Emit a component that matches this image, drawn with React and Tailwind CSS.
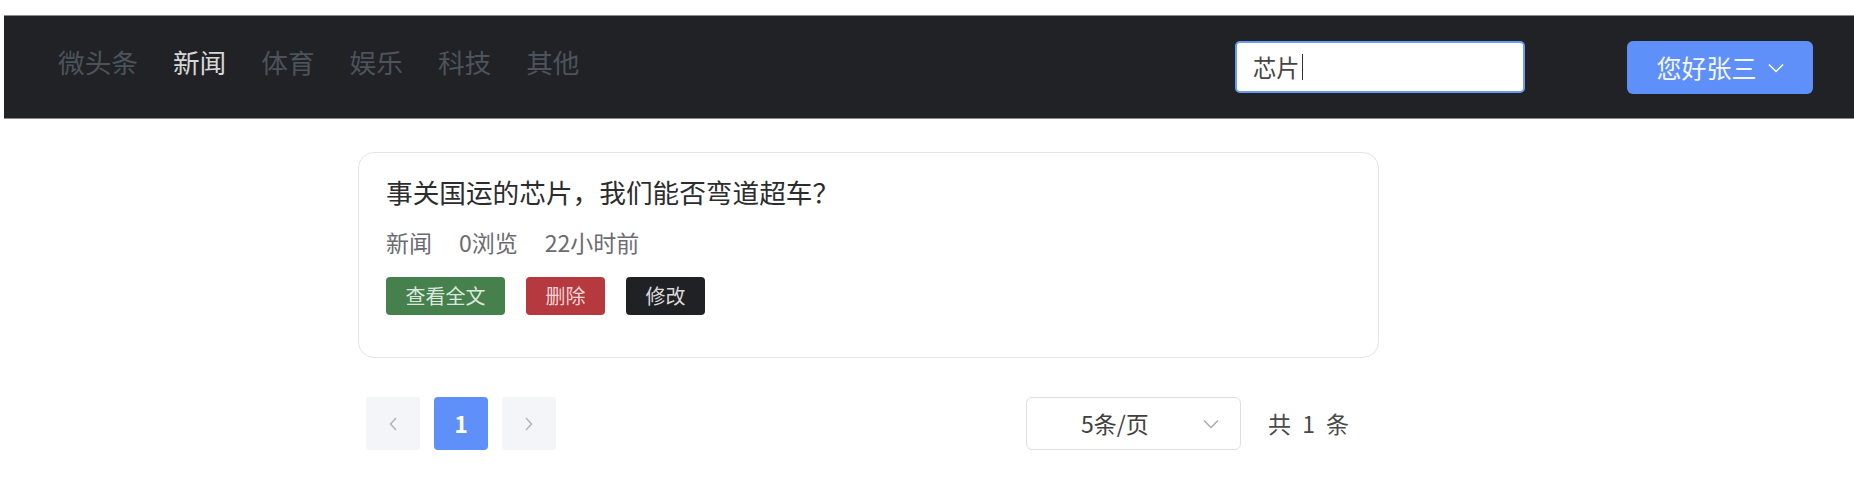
import React from 'react';

const font = "font-['Noto_Sans_CJK_SC','Noto_Sans',sans-serif]";

// Header nav items
const navItems = [
    { label: '微头条', active: false },
    { label: '新闻', active: true },
    { label: '体育', active: false },
    { label: '娱乐', active: false },
    { label: '科技', active: false },
    { label: '其他', active: false }
];

function Chevron({ dir, className }) {
    if (dir === 'down') {
        return (
            <svg width="16" height="10" viewBox="0 0 16 10" className={className}>
                <path d="M1 1.5 L8 8.5 L15 1.5" fill="none" stroke="currentColor" strokeWidth="1.5" />
            </svg>
        );
    }
    return (
        <svg width="8" height="14" viewBox="0 0 8 14" className={className}>
            <path d={dir === 'left' ? 'M7 1 L1.5 7 L7 13' : 'M1 1 L6.5 7 L1 13'} fill="none" stroke="currentColor" strokeWidth="1.6" />
        </svg>
    );
}

function Header() {
    return (
        <div className="pt-[15px] pl-[4px]">
            <header className="h-[104px] bg-[#212226] border-y border-[#8a8a8a] flex items-center pl-[54px] pr-[41px]">
                <nav className="flex gap-[35px] text-[26.67px] leading-[36px] mb-[10px]">
                    {navItems.map((item, index) => (
                        <span key={index} className={item.active ? 'text-[#d6d6d6]' : 'text-[#4c535b]'}>
                            {item.label}
                        </span>
                    ))}
                </nav>
                <div className="ml-auto flex items-center gap-[102px]">
                    {/* Search box */}
                    <div className="w-[290px] h-[52px] bg-white border-2 border-[#6a9cf7] rounded-[5px] flex items-center pl-[16px]">
                        <span className="text-[23.3px] leading-[30px] text-[#454545]">芯片</span>
                        <span className="w-[1.5px] h-[26px] bg-[#333] ml-[2px]"></span>
                    </div>
                    {/* User dropdown */}
                    <button className="w-[186px] h-[53px] bg-[#5f8ff8] rounded-[6px] flex items-center justify-center gap-[11px] text-[#f4f7ff] text-[25px] leading-[32px]">
                        <span>您好张三</span>
                        <Chevron dir="down" className="text-white mt-[2px]" />
                    </button>
                </div>
            </header>
        </div>
    );
}

function NewsCard() {
    return (
        <div className="w-[1021px] border border-[#e4e4e6] rounded-[16px] px-[27px] pt-[19px] pb-[42px]">
            <h2 className="text-[26.67px] leading-[39px] text-[#2c2c2e]">事关国运的芯片，我们能否弯道超车？</h2>
            <div className="mt-[15px] flex gap-[27px] text-[23px] leading-[33px] text-[#6c6b72]">
                <span>新闻</span>
                <span>0浏览</span>
                <span>22小时前</span>
            </div>
            <div className="mt-[18px] flex gap-[21px] text-[20px] leading-[26px]">
                <button className="h-[38px] px-[19.5px] bg-[#45804d] text-[#dce8dd] rounded-[4px]">查看全文</button>
                <button className="h-[38px] px-[19.5px] bg-[#b5393e] text-[#f0d6d7] rounded-[4px]">删除</button>
                <button className="h-[38px] px-[19.5px] bg-[#202124] text-[#dadada] rounded-[4px]">修改</button>
            </div>
        </div>
    );
}

function Pagination() {
    return (
        <div className="mt-[39px] pl-[8px] flex items-center">
            <div className="flex gap-[14px]">
                <div className="w-[54px] h-[53px] bg-[#f4f5f8] rounded-[3px] flex items-center justify-center text-[#b4b6bb]">
                    <Chevron dir="left" />
                </div>
                <div className="w-[54px] h-[53px] bg-[#5f8ff8] rounded-[4px] flex items-center justify-center text-white text-[23px] font-bold">
                    1
                </div>
                <div className="w-[54px] h-[53px] bg-[#f4f5f8] rounded-[3px] flex items-center justify-center text-[#b4b6bb]">
                    <Chevron dir="right" />
                </div>
            </div>
            <div className="ml-[470px] w-[215px] h-[53px] border border-[#dcdfe6] rounded-[6px] flex items-center pl-[54px] pr-[21px] text-[23px] text-[#404040]">
                <span>5条/页</span>
                <Chevron dir="down" className="ml-auto text-[#a8abb2]" />
            </div>
            <span className="ml-[27px] text-[23px] tracking-[3px] text-[#4a4a4a]">共 1 条</span>
        </div>
    );
}

export default function App() {
    return (
        <div className={`min-h-screen bg-white ${font}`}>
            <Header />
            <main className="pl-[358px] pt-[33px]">
                <NewsCard />
                <Pagination />
            </main>
        </div>
    );
}
